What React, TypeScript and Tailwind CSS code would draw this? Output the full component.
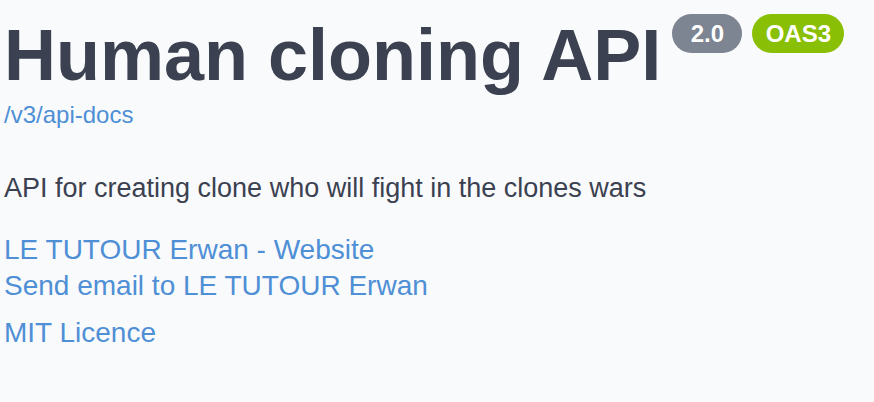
import React from 'react';

const App: React.FC = () => {
  return (
    <div className="min-h-[402px] w-full bg-[#f9fafb] pl-[4px] pt-[15px] font-['Liberation_Sans',Arial,sans-serif] text-[#3b4151]">
      <div className="flex items-start">
        <h1 className="text-[72px] leading-[80px] font-bold">Human cloning API</h1>
        <div className="ml-[11px] mt-[-1px] flex gap-[10px]">
          <span className="flex h-[39px] w-[70px] items-center justify-center rounded-full bg-[#7d8492] text-[24px] font-bold text-white">
            2.0
          </span>
          <span className="flex h-[39px] w-[92px] items-center justify-center rounded-full bg-[#89bf04] text-[24px] font-bold text-white">
            OAS3
          </span>
        </div>
      </div>
      <a href="#" className="mt-[6px] block text-[24px] leading-[28px] text-[#4e8fd6]">
        /v3/api-docs
      </a>
      <p className="mt-[43px] text-[27px] leading-[32px]">
        API for creating clone who will fight in the clones wars
      </p>
      <div className="mt-[28px] flex flex-col text-[28px] leading-[36px] text-[#4e8fd6]">
        <a href="#">LE TUTOUR Erwan - Website</a>
        <a href="#">Send email to LE TUTOUR Erwan</a>
        <a href="#" className="mt-[11px]">MIT Licence</a>
      </div>
    </div>
  );
};

export default App;
